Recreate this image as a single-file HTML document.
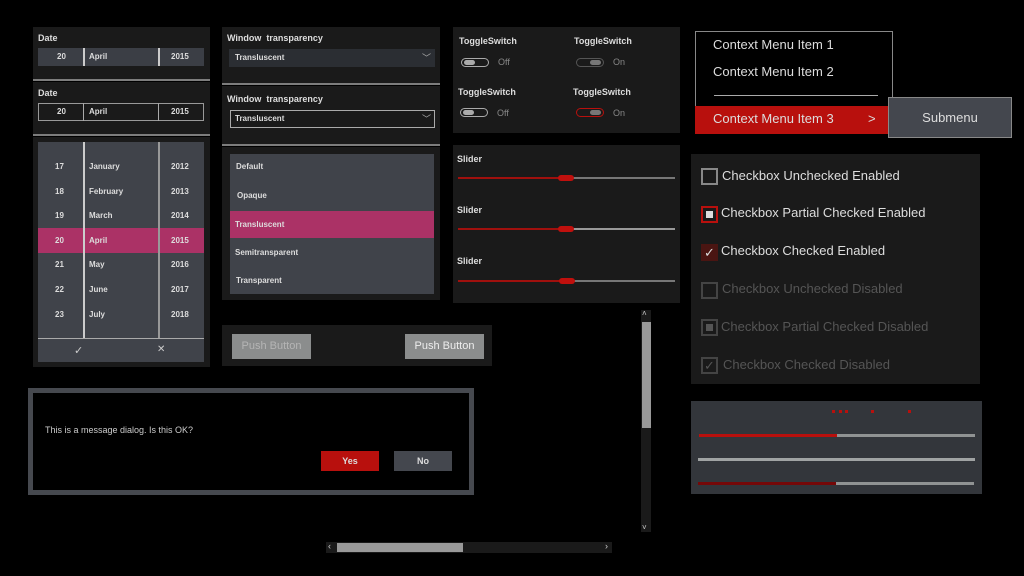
<!DOCTYPE html><html><head><style>
*{margin:0;padding:0;box-sizing:border-box}
body{width:1024px;height:576px;background:#000;position:relative;overflow:hidden;font-family:"Liberation Sans",sans-serif;color:#ddd}
.a{position:absolute}
.p{position:absolute;background:#1a1a1a}
.lbl{position:absolute;font-size:9px;font-weight:bold;color:#ddd}
.hl{position:absolute;height:2px;background:#7d7d7d}
.t{position:absolute;font-size:8px;font-weight:bold;color:#ddd}
.vs{position:absolute;width:2px;background:#aaa}
.cb{position:absolute;width:17px;height:17px;border:2px solid #888}
.ct{position:absolute;font-size:13px;color:#ddd}
.dis{color:#555}
</style></head><body>
<div class="p" style="left:33px;top:27px;width:177px;height:53px"></div>
<div class="hl" style="left:33px;top:79px;width:177px"></div>
<div class="lbl" style="left:38px;top:33px">Date</div>
<div class="a" style="left:38px;top:48px;width:166px;height:18px;background:#3b3e45"></div>
<div class="vs" style="left:83px;top:48px;height:18px;background:#ccc"></div>
<div class="vs" style="left:158px;top:48px;height:18px;background:#ccc"></div>
<div class="t" style="left:57px;top:52px">20</div><div class="t" style="left:89px;top:52px">April</div><div class="t" style="left:171px;top:52px">2015</div>
<div class="p" style="left:33px;top:82px;width:177px;height:53px"></div>
<div class="hl" style="left:33px;top:134px;width:177px"></div>
<div class="lbl" style="left:38px;top:88px">Date</div>
<div class="a" style="left:38px;top:103px;width:166px;height:18px;border:1px solid #999"></div>
<div class="vs" style="left:83px;top:103px;height:18px;width:1px"></div>
<div class="vs" style="left:158px;top:103px;height:18px;width:1px"></div>
<div class="t" style="left:57px;top:107px">20</div><div class="t" style="left:89px;top:107px">April</div><div class="t" style="left:171px;top:107px">2015</div>
<div class="p" style="left:33px;top:137px;width:177px;height:230px"></div>
<div class="a" style="left:38px;top:142px;width:166px;height:220px;background:#40434a"></div>
<div class="a" style="left:38px;top:228px;width:166px;height:25px;background:#ab3266"></div>
<div class="vs" style="left:83px;top:142px;height:197px;background:#ccc"></div>
<div class="vs" style="left:158px;top:142px;height:197px;background:#999"></div>
<div class="a" style="left:38px;top:338px;width:166px;height:1px;background:#aaa"></div>
<div class="t" style="left:55px;top:155px;line-height:24.6px">17<br>18<br>19<br>20<br>21<br>22<br>23</div>
<div class="t" style="left:89px;top:155px;line-height:24.6px">January<br>February<br>March<br>April<br>May<br>June<br>July</div>
<div class="t" style="left:171px;top:155px;line-height:24.6px">2012<br>2013<br>2014<br>2015<br>2016<br>2017<br>2018</div>
<div class="a" style="left:74px;top:344px;font-size:11px;color:#ccc">✓</div>
<div class="a" style="left:157px;top:344px;font-size:10px;color:#ccc">✕</div>
<div class="p" style="left:222px;top:27px;width:218px;height:57px"></div>
<div class="hl" style="left:222px;top:83px;width:218px"></div>
<div class="lbl" style="left:227px;top:33px">Window&nbsp; transparency</div>
<div class="a" style="left:229px;top:49px;width:206px;height:18px;background:#2b2e33"></div>
<div class="t" style="left:235px;top:53px">Transluscent</div><div class="a" style="left:422px;top:51px;font-size:9px;color:#aaa">﹀</div>
<div class="p" style="left:222px;top:86px;width:218px;height:59px"></div>
<div class="hl" style="left:222px;top:144px;width:218px"></div>
<div class="lbl" style="left:227px;top:94px">Window&nbsp; transparency</div>
<div class="a" style="left:230px;top:110px;width:205px;height:18px;border:1px solid #aaa"></div>
<div class="t" style="left:235px;top:114px">Transluscent</div><div class="a" style="left:422px;top:112px;font-size:9px;color:#aaa">﹀</div>
<div class="p" style="left:222px;top:147px;width:218px;height:153px"></div>
<div class="a" style="left:230px;top:154px;width:204px;height:140px;background:#40434a"></div>
<div class="a" style="left:230px;top:211px;width:204px;height:27px;background:#ab3266"></div>
<div class="t" style="left:236px;top:162px">Default</div>
<div class="t" style="left:237px;top:191px">Opaque</div>
<div class="t" style="left:235px;top:220px">Transluscent</div>
<div class="t" style="left:235px;top:248px">Semitransparent</div>
<div class="t" style="left:236px;top:276px">Transparent</div>
<div class="p" style="left:222px;top:325px;width:270px;height:41px"></div>
<div class="a" style="left:232px;top:334px;width:79px;height:25px;background:#8b8d8d;color:#b5b5b5;font-size:11px;text-align:center;line-height:25px">Push Button</div>
<div class="a" style="left:405px;top:334px;width:79px;height:25px;background:#8b8d8d;color:#eee;font-size:11px;text-align:center;line-height:25px">Push Button</div>
<div class="p" style="left:453px;top:27px;width:227px;height:106px"></div>
<div class="lbl" style="left:459px;top:36px">ToggleSwitch</div>
<div class="lbl" style="left:574px;top:36px">ToggleSwitch</div>
<div class="lbl" style="left:458px;top:87px">ToggleSwitch</div>
<div class="lbl" style="left:573px;top:87px">ToggleSwitch</div>
<div class="a" style="left:461px;top:58px;width:28px;height:9px;border:1px solid #aaa;border-radius:5px"><div class="a" style="left:2px;top:1px;width:11px;height:5px;background:#aaa;border-radius:3px"></div></div>
<div class="a" style="left:498px;top:57px;font-size:9px;color:#888">Off</div>
<div class="a" style="left:576px;top:58px;width:28px;height:9px;border:1px solid #555;border-radius:5px"><div class="a" style="left:13px;top:1px;width:11px;height:5px;background:#777;border-radius:3px"></div></div>
<div class="a" style="left:613px;top:57px;font-size:9px;color:#888">On</div>
<div class="a" style="left:460px;top:108px;width:28px;height:9px;border:1px solid #aaa;border-radius:5px"><div class="a" style="left:2px;top:1px;width:11px;height:5px;background:#aaa;border-radius:3px"></div></div>
<div class="a" style="left:497px;top:108px;font-size:9px;color:#888">Off</div>
<div class="a" style="left:576px;top:108px;width:28px;height:9px;border:1px solid #b8100d;border-radius:5px"><div class="a" style="left:13px;top:1px;width:11px;height:5px;background:#777;border-radius:3px"></div></div>
<div class="a" style="left:613px;top:108px;font-size:9px;color:#888">On</div>
<div class="p" style="left:453px;top:145px;width:227px;height:158px"></div>
<div class="lbl" style="left:457px;top:154px">Slider</div>
<div class="lbl" style="left:457px;top:205px">Slider</div>
<div class="lbl" style="left:457px;top:256px">Slider</div>
<div class="a" style="left:458px;top:177px;width:108px;height:2px;background:#a0100d"></div><div class="a" style="left:566px;top:177px;width:109px;height:2px;background:#777"></div>
<div class="a" style="left:558px;top:175px;width:16px;height:6px;background:#c0100d;border-radius:3px"></div>
<div class="a" style="left:458px;top:228px;width:108px;height:2px;background:#a0100d"></div><div class="a" style="left:566px;top:228px;width:109px;height:2px;background:#999"></div>
<div class="a" style="left:558px;top:226px;width:16px;height:6px;background:#c0100d;border-radius:3px"></div>
<div class="a" style="left:458px;top:280px;width:108px;height:2px;background:#a0100d"></div><div class="a" style="left:566px;top:280px;width:109px;height:2px;background:#777"></div>
<div class="a" style="left:559px;top:278px;width:16px;height:6px;background:#c0100d;border-radius:3px"></div>
<div class="a" style="left:695px;top:31px;width:198px;height:103px;border:1px solid #888;background:#000"></div>
<div class="ct" style="left:713px;top:37px">Context Menu Item 1</div>
<div class="ct" style="left:713px;top:64px">Context Menu Item 2</div>
<div class="a" style="left:714px;top:95px;width:164px;height:1px;background:#aaa"></div>
<div class="a" style="left:695px;top:106px;width:193px;height:28px;background:#b8100d"></div>
<div class="ct" style="left:713px;top:111px">Context Menu Item 3</div>
<div class="ct" style="left:868px;top:111px">&gt;</div>
<div class="a" style="left:888px;top:97px;width:124px;height:41px;background:#44474e;border:1px solid #888;font-size:13px;text-align:center;line-height:40px">Submenu</div>
<div class="p" style="left:691px;top:154px;width:289px;height:230px"></div>
<div class="cb" style="left:701px;top:168px"></div><div class="ct" style="left:722px;top:168px">Checkbox Unchecked Enabled</div>
<div class="cb" style="left:701px;top:206px;border-color:#b8100d"><div class="a" style="left:3px;top:3px;width:7px;height:7px;background:#ddd"></div></div><div class="ct" style="left:721px;top:205px">Checkbox Partial Checked Enabled</div>
<div class="a" style="left:701px;top:244px;width:17px;height:17px;background:#4a1512;color:#ddd;font-size:13px;line-height:17px;text-align:center">✓</div><div class="ct" style="left:721px;top:243px">Checkbox Checked Enabled</div>
<div class="cb" style="left:701px;top:282px;border-color:#444"></div><div class="ct dis" style="left:722px;top:281px">Checkbox Unchecked Disabled</div>
<div class="cb" style="left:701px;top:319px;border-color:#444"><div class="a" style="left:3px;top:3px;width:7px;height:7px;background:#555"></div></div><div class="ct dis" style="left:721px;top:319px">Checkbox Partial Checked Disabled</div>
<div class="cb" style="left:701px;top:357px;border-color:#444;color:#555;font-size:13px;line-height:13px;text-align:center">✓</div><div class="ct dis" style="left:723px;top:357px">Checkbox Checked Disabled</div>
<div class="a" style="left:691px;top:401px;width:291px;height:93px;background:#33363b"></div>
<div class="a" style="left:832px;top:410px;width:3px;height:3px;background:#b8100d;box-shadow:7px 0 #b8100d,13px 0 #b8100d,39px 0 #b8100d,76px 0 #b8100d"></div>
<div class="a" style="left:699px;top:434px;width:138px;height:3px;background:#b8100d"></div><div class="a" style="left:837px;top:434px;width:138px;height:3px;background:#909393"></div>
<div class="a" style="left:698px;top:458px;width:277px;height:3px;background:#a0a3a3"></div>
<div class="a" style="left:698px;top:482px;width:138px;height:3px;background:#750808"></div><div class="a" style="left:836px;top:482px;width:138px;height:3px;background:#909393"></div>
<div class="a" style="left:28px;top:388px;width:446px;height:107px;border:5px solid #46494f;background:#000"></div>
<div class="a" style="left:45px;top:425px;font-size:9px;color:#ccc">This is a message dialog. Is this OK?</div>
<div class="a" style="left:321px;top:451px;width:58px;height:20px;background:#b8100d;font-size:9px;font-weight:bold;text-align:center;line-height:20px">Yes</div>
<div class="a" style="left:394px;top:451px;width:58px;height:20px;background:#44474e;font-size:9px;font-weight:bold;text-align:center;line-height:20px">No</div>
<div class="a" style="left:641px;top:310px;width:10px;height:222px;background:#1a1a1a"></div>
<div class="a" style="left:642px;top:322px;width:9px;height:106px;background:#999"></div>
<div class="a" style="left:642px;top:309px;font-size:8px;color:#ccc">˄</div>
<div class="a" style="left:642px;top:523px;font-size:8px;color:#ccc">˅</div>
<div class="a" style="left:326px;top:542px;width:286px;height:11px;background:#1a1a1a"></div>
<div class="a" style="left:337px;top:543px;width:126px;height:9px;background:#999"></div>
<div class="a" style="left:328px;top:541px;font-size:9px;color:#ccc">‹</div>
<div class="a" style="left:605px;top:541px;font-size:9px;color:#ccc">›</div>
</body></html>
